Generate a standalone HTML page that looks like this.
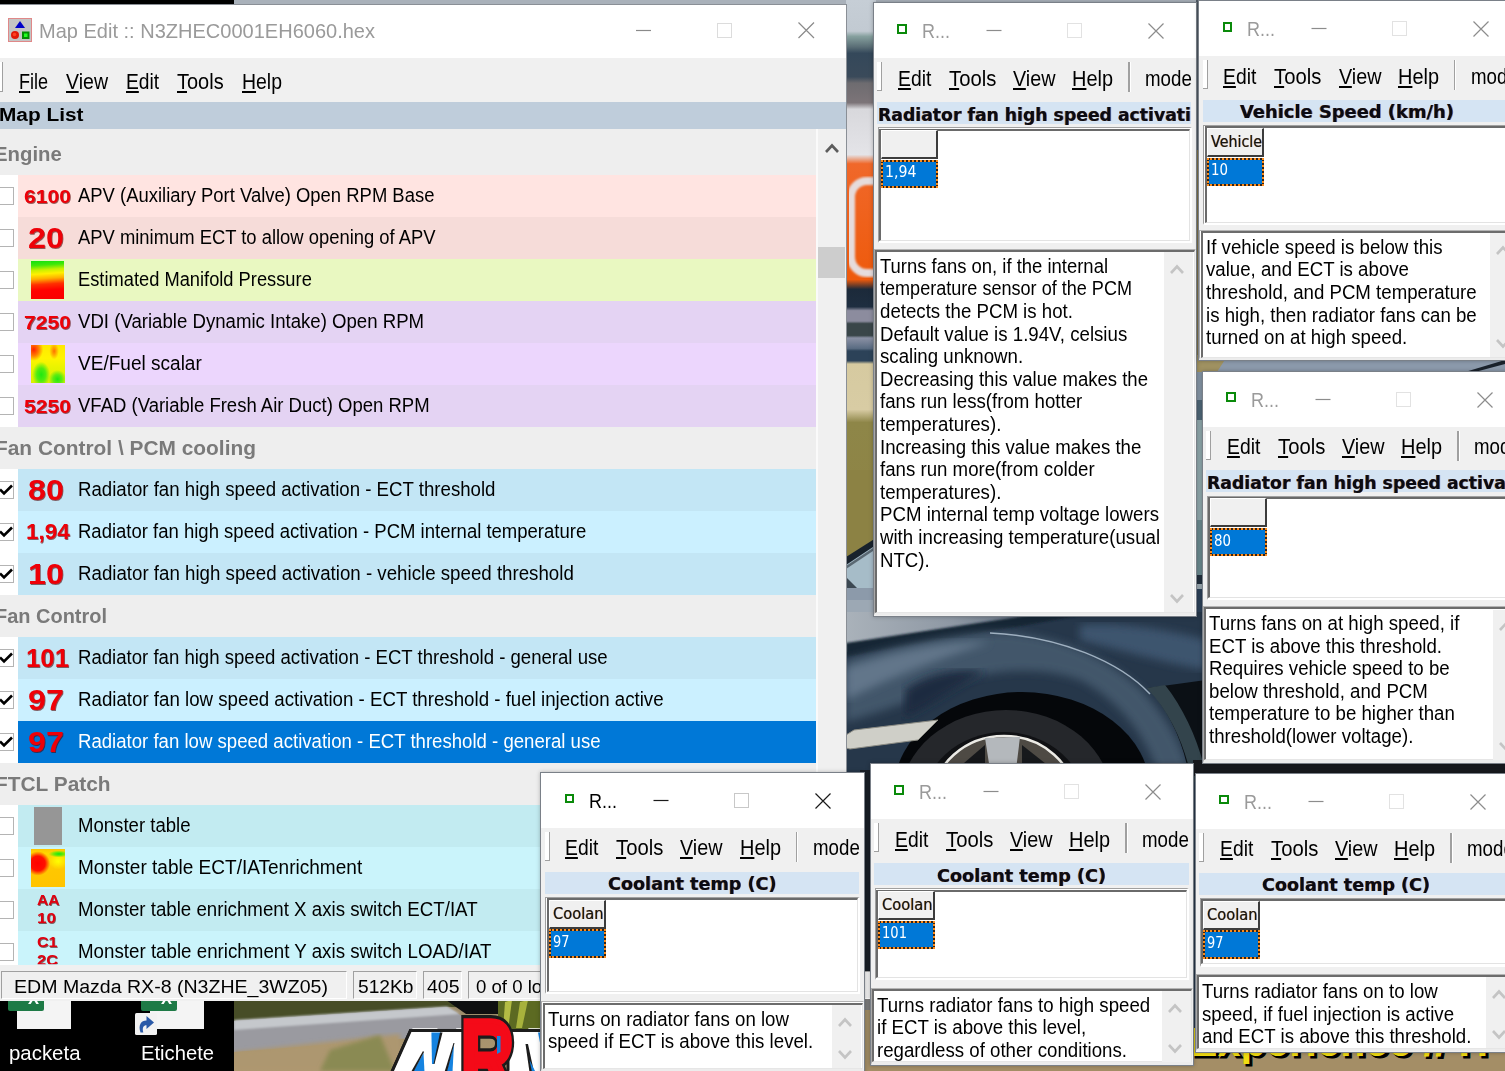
<!DOCTYPE html>
<html><head><meta charset="utf-8"><title>Map Edit</title><style>
html,body{margin:0;padding:0}
body{width:1505px;height:1071px;overflow:hidden;position:relative;background:#000;font-family:'Liberation Sans',sans-serif}
#r{position:absolute;left:0;top:0;width:1505px;height:1071px;overflow:hidden}
#r div,#r svg{position:absolute;box-sizing:border-box}
.t{position:absolute;white-space:pre;transform-origin:0 0;display:block}
.t u{text-decoration:underline;text-underline-offset:2px;text-decoration-thickness:1.5px}
</style></head><body><div id="r">
<svg style="left:0;top:0" width="1505" height="1071" viewBox="0 0 1505 1071">
<defs>
<filter id="b2" x="-5%" y="-5%" width="110%" height="110%"><feGaussianBlur stdDeviation="2"/></filter>
<filter id="b4" x="-5%" y="-5%" width="110%" height="110%"><feGaussianBlur stdDeviation="4"/></filter>
<filter id="b1" x="-5%" y="-5%" width="110%" height="110%"><feGaussianBlur stdDeviation="1"/></filter>
<linearGradient id="strip" x1="0" y1="0" x2="0" y2="1">
<stop offset="0" stop-color="#c6ced6"/><stop offset="0.048" stop-color="#c2cad2"/><stop offset="0.056" stop-color="#86a09e"/>
<stop offset="0.072" stop-color="#5a6e76"/><stop offset="0.082" stop-color="#34485a"/><stop offset="0.118" stop-color="#3a4a5a"/><stop offset="0.128" stop-color="#6e6c70"/>
<stop offset="0.158" stop-color="#7c7478"/><stop offset="0.168" stop-color="#d8d8dc"/><stop offset="0.238" stop-color="#e4e4e8"/>
<stop offset="0.252" stop-color="#f0682a"/><stop offset="0.430" stop-color="#ee5a0c"/><stop offset="0.445" stop-color="#1c2a3a"/>
<stop offset="0.472" stop-color="#1e2e40"/><stop offset="0.478" stop-color="#8c8c9e"/><stop offset="0.494" stop-color="#8c8c9e"/>
<stop offset="0.498" stop-color="#3a4649"/><stop offset="0.516" stop-color="#3a4649"/><stop offset="0.520" stop-color="#8a90a4"/>
<stop offset="0.536" stop-color="#5a6c82"/><stop offset="0.540" stop-color="#2c4258"/><stop offset="0.555" stop-color="#2c4258"/>
<stop offset="0.560" stop-color="#d6caa0"/><stop offset="0.630" stop-color="#d8cca4"/><stop offset="0.650" stop-color="#8e8648"/>
<stop offset="1" stop-color="#8c8040"/>
</linearGradient>
<linearGradient id="hood" x1="0" y1="0" x2="1" y2="0"><stop offset="0" stop-color="#aab2ba"/><stop offset="0.5" stop-color="#8e98a4"/><stop offset="1" stop-color="#566476"/></linearGradient>
<linearGradient id="sand" x1="0" y1="0" x2="0" y2="1"><stop offset="0" stop-color="#9a8a6a"/><stop offset="1" stop-color="#b09a70"/></linearGradient>
</defs>
<!-- base -->
<rect width="1505" height="1071" fill="#2a3b50"/>
<!-- top edge strip -->
<rect x="234" y="0" width="1271" height="5" fill="#a9b1ba"/>
<rect x="0" y="0" width="234" height="4" fill="#000"/>
<!-- vertical strip between main window and win1 (x 846..874), y 0..650 -->
<rect x="846" y="0" width="30" height="650" fill="url(#strip)"/>
<!-- white "0" ring on orange -->
<rect x="851" y="181" width="40" height="92" rx="16" fill="none" stroke="#e6dcdc" stroke-width="8" filter="url(#b1)"/>
<!-- lower strip: olive -> windshield -> car -->
<rect x="846" y="470" width="30" height="110" fill="#8c8244"/>
<polygon points="846,560 876,540 876,700 846,700" fill="#a6bcc8"/>
<polygon points="846,557 876,538 876,545 846,565" fill="#18222c"/>
<polygon points="846,566 876,546 876,549 846,569" fill="#5a6872"/>
<polygon points="846,577 857,588 846,590" fill="#3c4852"/>
<rect x="846" y="588" width="30" height="60" fill="#8c9aaa"/>
<rect x="846" y="600" width="30" height="14" fill="#9ca8b4"/>
<!-- gap between win1/win2 columns and right gaps -->
<rect x="1196" y="0" width="8" height="380" fill="#55606a"/>
<rect x="1196" y="150" width="8" height="215" fill="#8a7c50"/>
<rect x="1196" y="355" width="309" height="20" fill="#8c9aac"/>
<polygon points="1196,355 1228,355 1215,375 1196,375" fill="#a09262"/>
<polygon points="1465,372 1505,360 1505,364 1475,372" fill="#1a222c"/>
<rect x="1195" y="372" width="10" height="30" fill="#8494a4"/>
<rect x="1195" y="400" width="10" height="20" fill="#4e6676"/>
<rect x="1195" y="420" width="10" height="156" fill="#8ea6aa"/>
<rect x="1195" y="520" width="10" height="56" fill="#6a888e"/>
<rect x="1195" y="575" width="10" height="9" fill="#22303e"/>
<rect x="1195" y="584" width="10" height="5" fill="#9aa8b0"/>
<rect x="1195" y="589" width="10" height="33" fill="#2c4058"/>
<!-- fender region (x 846..1206, y 612..780) -->
<g>
<rect x="846" y="612" width="364" height="170" fill="#26374a"/>
<polygon points="846,612 1060,612 846,652" fill="url(#hood)"/>
<polygon points="846,643 1050,612 1100,612 846,657" fill="#172536" filter="url(#b1)"/>
<!-- fender highlight -->
<path d="M846 660 C 900 645, 960 632, 1000 632 C 1060 634, 1110 660, 1140 688 C 1170 720, 1185 750, 1192 782 L 1160 782 C 1150 740, 1120 700, 1080 680 C 1040 665, 980 668, 940 690 C 900 705, 870 715, 846 722 Z" fill="#43566b" filter="url(#b4)"/>
<path d="M846 668 C 900 650, 950 640, 990 642 C 960 652, 900 672, 846 700 Z" fill="#62768a" filter="url(#b4)"/>
<path d="M1080 625 C 1120 622, 1170 630, 1206 640 L 1206 670 C 1170 664, 1120 650, 1080 640 Z" fill="#3d546e" filter="url(#b4)"/>
<path d="M905 690 C 930 672, 960 668, 985 672 C 960 685, 930 705, 905 718 Z" fill="#1d2c3f" filter="url(#b4)"/>
<!-- arch ridge highlight -->
<path d="M990 633 C 1060 636, 1120 662, 1150 694" stroke="#9fb0c0" stroke-width="1.5" fill="none"/>
<!-- wheel arch -->
<ellipse cx="1022" cy="790" rx="128" ry="98" fill="#05070a"/>
<ellipse cx="1006" cy="800" rx="106" ry="90" fill="#25272b"/>
<ellipse cx="1004" cy="806" rx="82" ry="74" fill="#101114"/>
<ellipse cx="1004" cy="800" rx="71" ry="64" fill="#4e4a44" stroke="#ecebe6" stroke-width="2.5"/>
<polygon points="985,738 1020,737 1016,770 990,770" fill="#b4b8bc"/>
<polygon points="950,775 985,745 985,770 960,775" fill="#15171a"/>
<polygon points="1022,745 1060,775 1022,775" fill="#17191c"/>
<!-- side marker -->
<polygon points="846,735 854,730 938,720 918,740 850,749 846,748" fill="#cfcfc8" stroke="#8c8c84" stroke-width="1"/>
<!-- right vent -->
<path d="M1148 688 L 1206 680 L 1206 782 L 1190 782 C 1185 745, 1170 712, 1148 688 Z" fill="#0b1015"/>
<path d="M1147 688 L 1165 685 C 1185 710, 1200 745, 1206 775 L 1206 782 L 1192 782 C 1186 748, 1172 715, 1147 688 Z" fill="#33444c"/>
</g>
<!-- gap between win3 & win6, right of win5 -->
<rect x="1193" y="760" width="312" height="16" fill="#17191d"/>
<!-- gap between win4 and win5 (x 864..871) -->
<rect x="860" y="770" width="14" height="301" fill="#181e26"/>
<rect x="860" y="975" width="14" height="36" fill="#7c7c7c"/>
<rect x="860" y="1010" width="14" height="61" fill="#a08c64"/>
<!-- bottom sand under win5 / win6 -->
<rect x="863" y="1060" width="642" height="11" fill="#a48e66"/>
<rect x="1190" y="1046" width="315" height="25" fill="#a48e66"/>
<text x="1192.5" y="1058" font-family="'Liberation Sans',sans-serif" font-weight="700" font-size="41" fill="#000" stroke="#000" stroke-width="1.2" letter-spacing="0.3">Experience // H</text>
<text x="1190" y="1055.5" font-family="'Liberation Sans',sans-serif" font-weight="700" font-size="41" fill="#f2dc12" letter-spacing="0.3">Experience // H</text>
<!-- bottom-left photo (x 234..545, y 1000..1071) -->
<g>
<rect x="234" y="1000" width="312" height="71" fill="url(#sand)"/>
<polygon points="234,1000 546,1000 546,1008 447,1007 234,1021" fill="#474d27"/>
<polygon points="234,1021 447,1007 462,1016 462,1034 234,1052" fill="#9a9aa0"/>
<polygon points="234,1020 447,1006.5 460,1014 234,1030" fill="#c5c8cc" filter="url(#b1)"/>
<polygon points="234,1052 400,1034 400,1071 234,1071" fill="#ad9770" filter="url(#b2)"/>
<polygon points="330,1050 380,1035 395,1071 320,1071" fill="#8a8a52" filter="url(#b2)"/>
<polygon points="446,1000 500,1000 500,1014 466,1014" fill="#0e0f10"/>
<rect x="498" y="1000" width="48" height="36" fill="#5c6a22"/>
<polygon points="505,1002 512,1000 508,1030 503,1030" fill="#b4bc44"/>
<polygon points="520,1002 528,1000 522,1028 516,1028" fill="#a8b23c"/>
<!-- MRN logo -->
<g font-family="'Liberation Sans',sans-serif" font-weight="700" stroke-linejoin="miter">
<polygon points="410.5,1030.5 472,1030.5 472,1075 390.5,1075" fill="#ffffff" stroke="#1c1c1c" stroke-width="3"/>
<polygon points="508,1030.5 548,1030.5 548,1075 508,1075" fill="#ffffff" stroke="#1c1c1c" stroke-width="3"/>
<g transform="translate(392,1071) skewX(-24)">
<text x="1" y="20" font-size="84" fill="#ffffff" stroke="#ffffff" stroke-width="10">M</text>
<text x="117" y="20" font-size="84" fill="#ffffff" stroke="#ffffff" stroke-width="10">N</text>
</g>
<polyline points="390.5,1075 410.5,1030.5 472,1030.5" fill="none" stroke="#1c1c1c" stroke-width="3"/>
<polyline points="508,1030.5 548,1030.5" fill="none" stroke="#1c1c1c" stroke-width="3"/>
<polygon points="431.4,1032.5 441,1032.5 434,1064 432,1064" fill="#1583e0"/>
<polygon points="440,1032.5 442.5,1032.5 434.5,1064 433.5,1064" fill="#1c1c1c"/>
<polygon points="413,1072 424.5,1072 423.5,1053" fill="#1583e0"/>
<polygon points="411,1072 413.5,1072 424,1052 423,1051" fill="#1c1c1c"/>
<polygon points="446.5,1072 452.5,1072 454,1044" fill="#1583e0"/>
<polygon points="444.5,1072 447,1072 454.5,1043 453.5,1043" fill="#1c1c1c"/>
<polygon points="525.5,1044 528,1044 534,1072 529.5,1072" fill="#1c1c1c"/>
<polygon points="529.5,1060 532,1072 535.5,1072" fill="#1583e0"/>
<polygon points="538,1032.5 541.5,1032.5 541.5,1050" fill="#1583e0"/>
<g transform="translate(464,1094) scale(0.70,1)">
<text x="-5" y="0" font-size="106" fill="#1c1c1c" stroke="#1c1c1c" stroke-width="12">R</text>
<text x="-5" y="0" font-size="106" fill="#f40a18" stroke="#f40a18" stroke-width="5.5">R</text>
</g>
<polygon points="497,1036 500.5,1036 500.5,1052 497,1054" fill="#1583e0"/>
</g>
</g>
</g>
</svg>

<div style="left:-1px;top:3.5px;width:848px;height:997.5px;background:#ffffff;border:1px solid #8a8f96;"></div>
<svg style="left:8px;top:18px" width="24" height="24" viewBox="0 0 24 24">
<rect x="0.5" y="0.5" width="23" height="23" fill="#c4c4c4" stroke="#e08888"/>
<polygon points="12,3 17,10 7,10" fill="#0000c8"/>
<circle cx="7" cy="17" r="4" fill="#e01808"/><circle cx="6.5" cy="16.5" r="1.8" fill="#ff4020"/>
<rect x="14" y="13.5" width="7.5" height="7.5" fill="#008c00"/><rect x="16" y="15.5" width="3.5" height="3.5" fill="#20ff20"/>
</svg>
<span class="t" style="left:38.60px;top:21.74px;font:400 19.8px/1 'Liberation Sans', sans-serif;color:#9a9a9a;transform:scaleX(1.0119);">Map Edit :: N3ZHEC0001EH6060.hex</span>
<svg style="left:620px;top:4px" width="226" height="54" viewBox="0 0 226 54" fill="none">
<path d="M16 26.5H31" stroke="#8a8a8a" stroke-width="1.2"/>
<rect x="97.5" y="19.5" width="14" height="14" stroke="#dcdcdc" stroke-width="1"/>
<path d="M178.5 18.5L194 34M194 18.5L178.5 34" stroke="#8a8a8a" stroke-width="1.2"/>
</svg>
<div style="left:0px;top:58px;width:846px;height:44px;background:#f0f0f0;"></div>
<div style="left:0px;top:62px;width:3px;height:30px;background:#ffffff;border-right:1px solid #a0a0a0;border-bottom:1px solid #a0a0a0;"></div>
<span class="t" style="left:19.30px;top:71.88px;font:400 21.4px/1 'Liberation Sans', sans-serif;color:#000;transform:scaleX(0.8442);"><u>F</u>ile</span>
<span class="t" style="left:66.20px;top:71.88px;font:400 21.4px/1 'Liberation Sans', sans-serif;color:#000;transform:scaleX(0.9134);"><u>V</u>iew</span>
<span class="t" style="left:126.00px;top:71.88px;font:400 21.4px/1 'Liberation Sans', sans-serif;color:#000;transform:scaleX(0.8980);"><u>E</u>dit</span>
<span class="t" style="left:176.80px;top:71.88px;font:400 21.4px/1 'Liberation Sans', sans-serif;color:#000;transform:scaleX(0.9332);"><u>T</u>ools</span>
<span class="t" style="left:241.60px;top:71.88px;font:400 21.4px/1 'Liberation Sans', sans-serif;color:#000;transform:scaleX(0.9091);"><u>H</u>elp</span>
<div style="left:0px;top:102px;width:846px;height:27px;background:#bfcddb;"></div>
<span class="t" style="left:-1.00px;top:106.37px;font:700 18.7px/1 'Liberation Sans', sans-serif;color:#000;transform:scaleX(1.1148);">Map List</span>
<div style="left:0px;top:129px;width:846px;height:842px;background:#f0f0f0;"></div>
<div style="left:0px;top:129px;width:816px;height:836px;background:#eeeeee;"></div>
<div style="left:816px;top:129px;width:2px;height:836px;background:#fafafa;"></div>
<div style="left:818px;top:129px;width:28px;height:836px;background:#f0f0f0;"></div>
<div style="left:818px;top:247px;width:27px;height:31px;background:#cdcdcd;"></div>
<svg style="left:824px;top:142px" width="16" height="12" viewBox="0 0 16 12" fill="none"><path d="M2 10L8 3.5L14 10" stroke="#5c5c5c" stroke-width="2.6"/></svg>
<span class="t" style="left:-6.30px;top:143.59px;font:700 20.8px/1 'Liberation Sans', sans-serif;color:#7a7a7a;transform:scaleX(0.9780);">Engine</span>
<div style="left:0px;top:175px;width:18px;height:42px;background:#ffffff;"></div>
<div style="left:18px;top:175px;width:798px;height:42px;background:#ffe4e1;"></div>
<div style="left:-4px;top:187px;width:18px;height:18px;background:#ffffff;border:1px solid #b4b4b4;"></div>
<span class="t" style="left:24.35px;top:186.72px;font:700 19.0px/1 'Liberation Sans', sans-serif;color:#ee0008;transform:scaleX(1.1093);text-shadow:0.8px 0.8px 0.6px rgba(80,0,0,.6);">6100</span>
<span class="t" style="left:78.20px;top:185.27px;font:400 20px/1 'Liberation Sans', sans-serif;color:#000000;transform:scaleX(0.9223);">APV (Auxiliary Port Valve) Open RPM Base</span>
<div style="left:0px;top:217px;width:18px;height:42px;background:#ffffff;"></div>
<div style="left:18px;top:217px;width:798px;height:42px;background:#f6dcd9;"></div>
<div style="left:-4px;top:229px;width:18px;height:18px;background:#ffffff;border:1px solid #b4b4b4;"></div>
<span class="t" style="left:28.39px;top:223.34px;font:700 30.0px/1 'Liberation Sans', sans-serif;color:#ee0008;transform:scaleX(1.0795);text-shadow:0.8px 0.8px 0.6px rgba(80,0,0,.6);">20</span>
<span class="t" style="left:78.20px;top:227.27px;font:400 20px/1 'Liberation Sans', sans-serif;color:#000000;transform:scaleX(0.9200);">APV minimum ECT to allow opening of APV</span>
<div style="left:0px;top:259px;width:18px;height:42px;background:#ffffff;"></div>
<div style="left:18px;top:259px;width:798px;height:42px;background:#e9f8c1;"></div>
<div style="left:-4px;top:271px;width:18px;height:18px;background:#ffffff;border:1px solid #b4b4b4;"></div>
<div style="left:30.7px;top:260.7px;width:33.2px;height:38.3px;background:linear-gradient(176deg,#10e010 0%,#40e808 12%,#c8f000 24%,#fff000 34%,#ffb000 46%,#ff3000 60%,#ff0000 75%,#f80000 100%);"></div>
<span class="t" style="left:78.20px;top:269.27px;font:400 20px/1 'Liberation Sans', sans-serif;color:#000000;transform:scaleX(0.9145);">Estimated Manifold Pressure</span>
<div style="left:0px;top:301px;width:18px;height:42px;background:#ffffff;"></div>
<div style="left:18px;top:301px;width:798px;height:42px;background:#e4d3f3;"></div>
<div style="left:-4px;top:313px;width:18px;height:18px;background:#ffffff;border:1px solid #b4b4b4;"></div>
<span class="t" style="left:24.35px;top:312.72px;font:700 19.0px/1 'Liberation Sans', sans-serif;color:#ee0008;transform:scaleX(1.1093);text-shadow:0.8px 0.8px 0.6px rgba(80,0,0,.6);">7250</span>
<span class="t" style="left:78.20px;top:311.27px;font:400 20px/1 'Liberation Sans', sans-serif;color:#000000;transform:scaleX(0.9304);">VDI (Variable Dynamic Intake) Open RPM</span>
<div style="left:0px;top:343px;width:18px;height:42px;background:#ffffff;"></div>
<div style="left:18px;top:343px;width:798px;height:42px;background:#ecd6fd;"></div>
<div style="left:-4px;top:355px;width:18px;height:18px;background:#ffffff;border:1px solid #b4b4b4;"></div>
<div style="left:30.7px;top:344.8px;width:34.7px;height:38.6px;background:radial-gradient(ellipse 28% 30% at 8% 12%,#ff2000 0%,#ff8000 55%,rgba(255,200,0,0) 100%),radial-gradient(ellipse 14% 22% at 68% 16%,#ff7000 0%,rgba(255,220,0,0) 100%),radial-gradient(ellipse 26% 34% at 30% 78%,#20e810 0%,#50ec10 50%,rgba(160,240,0,0) 100%),radial-gradient(ellipse 26% 24% at 78% 90%,#20e810 0%,#60ec10 50%,rgba(200,240,0,0) 100%),linear-gradient(180deg,#ffe800 0%,#fff400 35%,#e8f400 60%,#d8f000 100%);"></div>
<span class="t" style="left:78.20px;top:353.27px;font:400 20px/1 'Liberation Sans', sans-serif;color:#000000;transform:scaleX(0.9519);">VE/Fuel scalar</span>
<div style="left:0px;top:385px;width:18px;height:42px;background:#ffffff;"></div>
<div style="left:18px;top:385px;width:798px;height:42px;background:#e4d3f3;"></div>
<div style="left:-4px;top:397px;width:18px;height:18px;background:#ffffff;border:1px solid #b4b4b4;"></div>
<span class="t" style="left:24.35px;top:396.72px;font:700 19.0px/1 'Liberation Sans', sans-serif;color:#ee0008;transform:scaleX(1.1093);text-shadow:0.8px 0.8px 0.6px rgba(80,0,0,.6);">5250</span>
<span class="t" style="left:78.20px;top:395.27px;font:400 20px/1 'Liberation Sans', sans-serif;color:#000000;transform:scaleX(0.9259);">VFAD (Variable Fresh Air Duct) Open RPM</span>
<span class="t" style="left:-5.00px;top:437.59px;font:700 20.8px/1 'Liberation Sans', sans-serif;color:#7a7a7a;transform:scaleX(1.0040);">Fan Control \ PCM cooling</span>
<div style="left:0px;top:469px;width:18px;height:42px;background:#ffffff;"></div>
<div style="left:18px;top:469px;width:798px;height:42px;background:#c3e6f5;"></div>
<div style="left:-4px;top:481px;width:18px;height:18px;background:#ffffff;border:1px solid #b4b4b4;"></div>
<svg style="left:0px;top:484px" width="13" height="13" viewBox="0 0 13 13" fill="none"><path d="M0 5.5L4 9.5L12 1.5" stroke="#000" stroke-width="2.6"/></svg>
<span class="t" style="left:28.39px;top:475.35px;font:700 30.0px/1 'Liberation Sans', sans-serif;color:#ee0008;transform:scaleX(1.0795);text-shadow:0.8px 0.8px 0.6px rgba(80,0,0,.6);">80</span>
<span class="t" style="left:78.20px;top:479.27px;font:400 20px/1 'Liberation Sans', sans-serif;color:#000000;transform:scaleX(0.9326);">Radiator fan high speed activation - ECT threshold</span>
<div style="left:0px;top:511px;width:18px;height:42px;background:#ffffff;"></div>
<div style="left:18px;top:511px;width:798px;height:42px;background:#cbf0ff;"></div>
<div style="left:-4px;top:523px;width:18px;height:18px;background:#ffffff;border:1px solid #b4b4b4;"></div>
<svg style="left:0px;top:526px" width="13" height="13" viewBox="0 0 13 13" fill="none"><path d="M0 5.5L4 9.5L12 1.5" stroke="#000" stroke-width="2.6"/></svg>
<span class="t" style="left:25.97px;top:521.25px;font:700 22.0px/1 'Liberation Sans', sans-serif;color:#ee0008;transform:scaleX(1.0196);text-shadow:0.8px 0.8px 0.6px rgba(80,0,0,.6);">1,94</span>
<span class="t" style="left:78.20px;top:521.27px;font:400 20px/1 'Liberation Sans', sans-serif;color:#000000;transform:scaleX(0.9254);">Radiator fan high speed activation - PCM internal temperature</span>
<div style="left:0px;top:553px;width:18px;height:42px;background:#ffffff;"></div>
<div style="left:18px;top:553px;width:798px;height:42px;background:#c3e6f5;"></div>
<div style="left:-4px;top:565px;width:18px;height:18px;background:#ffffff;border:1px solid #b4b4b4;"></div>
<svg style="left:0px;top:568px" width="13" height="13" viewBox="0 0 13 13" fill="none"><path d="M0 5.5L4 9.5L12 1.5" stroke="#000" stroke-width="2.6"/></svg>
<span class="t" style="left:28.39px;top:559.35px;font:700 30.0px/1 'Liberation Sans', sans-serif;color:#ee0008;transform:scaleX(1.0795);text-shadow:0.8px 0.8px 0.6px rgba(80,0,0,.6);">10</span>
<span class="t" style="left:78.20px;top:563.27px;font:400 20px/1 'Liberation Sans', sans-serif;color:#000000;transform:scaleX(0.9349);">Radiator fan high speed activation - vehicle speed threshold</span>
<span class="t" style="left:-5.00px;top:605.59px;font:700 20.8px/1 'Liberation Sans', sans-serif;color:#7a7a7a;transform:scaleX(0.9598);">Fan Control</span>
<div style="left:0px;top:637px;width:18px;height:42px;background:#ffffff;"></div>
<div style="left:18px;top:637px;width:798px;height:42px;background:#c3e6f5;"></div>
<div style="left:-4px;top:649px;width:18px;height:18px;background:#ffffff;border:1px solid #b4b4b4;"></div>
<svg style="left:0px;top:652px" width="13" height="13" viewBox="0 0 13 13" fill="none"><path d="M0 5.5L4 9.5L12 1.5" stroke="#000" stroke-width="2.6"/></svg>
<span class="t" style="left:26.32px;top:645.79px;font:700 25.0px/1 'Liberation Sans', sans-serif;color:#ee0008;transform:scaleX(1.0295);text-shadow:0.8px 0.8px 0.6px rgba(80,0,0,.6);">101</span>
<span class="t" style="left:78.20px;top:647.27px;font:400 20px/1 'Liberation Sans', sans-serif;color:#000000;transform:scaleX(0.9292);">Radiator fan high speed activation - ECT threshold - general use</span>
<div style="left:0px;top:679px;width:18px;height:42px;background:#ffffff;"></div>
<div style="left:18px;top:679px;width:798px;height:42px;background:#cbf0ff;"></div>
<div style="left:-4px;top:691px;width:18px;height:18px;background:#ffffff;border:1px solid #b4b4b4;"></div>
<svg style="left:0px;top:694px" width="13" height="13" viewBox="0 0 13 13" fill="none"><path d="M0 5.5L4 9.5L12 1.5" stroke="#000" stroke-width="2.6"/></svg>
<span class="t" style="left:28.39px;top:685.35px;font:700 30.0px/1 'Liberation Sans', sans-serif;color:#ee0008;transform:scaleX(1.0795);text-shadow:0.8px 0.8px 0.6px rgba(80,0,0,.6);">97</span>
<span class="t" style="left:78.20px;top:689.27px;font:400 20px/1 'Liberation Sans', sans-serif;color:#000000;transform:scaleX(0.9345);">Radiator fan low speed activation - ECT threshold - fuel injection active</span>
<div style="left:0px;top:721px;width:18px;height:42px;background:#ffffff;"></div>
<div style="left:18px;top:721px;width:798px;height:42px;background:#0078d7;"></div>
<div style="left:-4px;top:733px;width:18px;height:18px;background:#ffffff;border:1px solid #b4b4b4;"></div>
<svg style="left:0px;top:736px" width="13" height="13" viewBox="0 0 13 13" fill="none"><path d="M0 5.5L4 9.5L12 1.5" stroke="#000" stroke-width="2.6"/></svg>
<span class="t" style="left:28.39px;top:727.35px;font:700 30.0px/1 'Liberation Sans', sans-serif;color:#ee0008;transform:scaleX(1.0795);text-shadow:0.8px 0.8px 0.6px rgba(80,0,0,.6);">97</span>
<span class="t" style="left:78.20px;top:731.27px;font:400 20px/1 'Liberation Sans', sans-serif;color:#ffffff;transform:scaleX(0.9296);">Radiator fan low speed activation - ECT threshold - general use</span>
<span class="t" style="left:-5.00px;top:773.59px;font:700 20.8px/1 'Liberation Sans', sans-serif;color:#7a7a7a;transform:scaleX(1.0037);">FTCL Patch</span>
<div style="left:0px;top:805px;width:18px;height:42px;background:#ffffff;"></div>
<div style="left:18px;top:805px;width:798px;height:42px;background:#c2ebf1;"></div>
<div style="left:-4px;top:817px;width:18px;height:18px;background:#ffffff;border:1px solid #b4b4b4;"></div>
<div style="left:34.1px;top:806.9px;width:27.8px;height:37.9px;background:#969696;"></div>
<span class="t" style="left:78.20px;top:815.27px;font:400 20px/1 'Liberation Sans', sans-serif;color:#000000;transform:scaleX(0.9284);">Monster table</span>
<div style="left:0px;top:847px;width:18px;height:42px;background:#ffffff;"></div>
<div style="left:18px;top:847px;width:798px;height:42px;background:#caf4fb;"></div>
<div style="left:-4px;top:859px;width:18px;height:18px;background:#ffffff;border:1px solid #b4b4b4;"></div>
<div style="left:30.7px;top:848.9px;width:34.1px;height:38.1px;background:radial-gradient(ellipse 36% 32% at 20% 38%,#ff0000 0%,#ff1000 60%,rgba(255,120,0,0) 100%),radial-gradient(ellipse 30% 9% at 82% 13%,#10e810 0%,#70e808 50%,rgba(255,230,0,0) 100%),radial-gradient(ellipse 30% 22% at 80% 32%,#ffff00 0%,rgba(255,220,0,0) 100%),linear-gradient(180deg,#ffc400 0%,#ffd800 12%,#ffc800 45%,#ffc400 100%);"></div>
<span class="t" style="left:78.20px;top:857.27px;font:400 20px/1 'Liberation Sans', sans-serif;color:#000000;transform:scaleX(0.9516);">Monster table ECT/IATenrichment</span>
<div style="left:0px;top:889px;width:18px;height:42px;background:#ffffff;"></div>
<div style="left:18px;top:889px;width:798px;height:42px;background:#c2ebf1;"></div>
<div style="left:-4px;top:901px;width:18px;height:18px;background:#ffffff;border:1px solid #b4b4b4;"></div>
<span class="t" style="left:36.50px;top:893.10px;font:700 14.3px/1 'Liberation Sans', sans-serif;color:#e00010;transform:scaleX(1.0893);text-shadow:0.6px 0.6px 0.4px rgba(80,0,0,.6);">AA</span>
<span class="t" style="left:36.50px;top:910.90px;font:700 14.3px/1 'Liberation Sans', sans-serif;color:#e00010;transform:scaleX(1.1945);text-shadow:0.6px 0.6px 0.4px rgba(80,0,0,.6);clip-path:inset(0 0 0.0px 0);">10</span>
<span class="t" style="left:78.20px;top:899.27px;font:400 20px/1 'Liberation Sans', sans-serif;color:#000000;transform:scaleX(0.9346);">Monster table enrichment X axis switch ECT/IAT</span>
<div style="left:0px;top:931px;width:18px;height:34px;background:#ffffff;"></div>
<div style="left:18px;top:931px;width:798px;height:34px;background:#caf4fb;"></div>
<div style="left:-4px;top:943px;width:18px;height:18px;background:#ffffff;border:1px solid #b4b4b4;"></div>
<span class="t" style="left:36.50px;top:935.10px;font:700 14.3px/1 'Liberation Sans', sans-serif;color:#e00010;transform:scaleX(1.1214);text-shadow:0.6px 0.6px 0.4px rgba(80,0,0,.6);">C1</span>
<span class="t" style="left:36.50px;top:952.90px;font:700 14.3px/1 'Liberation Sans', sans-serif;color:#e00010;transform:scaleX(1.1487);text-shadow:0.6px 0.6px 0.4px rgba(80,0,0,.6);clip-path:inset(0 0 2.9px 0);">2C</span>
<span class="t" style="left:78.20px;top:941.27px;font:400 20px/1 'Liberation Sans', sans-serif;color:#000000;transform:scaleX(0.9370);">Monster table enrichment Y axis switch LOAD/IAT</span>
<div style="left:0px;top:965px;width:846px;height:7px;background:#f0f0f0;"></div>
<div style="left:0px;top:965px;width:846px;height:36px;background:#f0f0f0;"></div>
<div style="left:1px;top:971.4px;width:345.6px;height:27.8px;background:#f0f0f0;border-top:1.2px solid #a0a0a0;border-left:1.2px solid #a0a0a0;border-right:1.2px solid #ffffff;border-bottom:1.2px solid #ffffff;"></div>
<div style="left:352.7px;top:971.4px;width:64.69999999999999px;height:27.8px;background:#f0f0f0;border-top:1.2px solid #a0a0a0;border-left:1.2px solid #a0a0a0;border-right:1.2px solid #ffffff;border-bottom:1.2px solid #ffffff;"></div>
<div style="left:422.6px;top:971.4px;width:39.69999999999999px;height:27.8px;background:#f0f0f0;border-top:1.2px solid #a0a0a0;border-left:1.2px solid #a0a0a0;border-right:1.2px solid #ffffff;border-bottom:1.2px solid #ffffff;"></div>
<div style="left:468.4px;top:971.4px;width:431.6px;height:27.8px;background:#f0f0f0;border-top:1.2px solid #a0a0a0;border-left:1.2px solid #a0a0a0;border-right:1.2px solid #ffffff;border-bottom:1.2px solid #ffffff;"></div>
<span class="t" style="left:13.50px;top:976.75px;font:400 19.2px/1 'Liberation Sans', sans-serif;color:#000;transform:scaleX(1.0190);">EDM Mazda RX-8 (N3ZHE_3WZ05)</span>
<span class="t" style="left:357.70px;top:976.75px;font:400 19.2px/1 'Liberation Sans', sans-serif;color:#000;transform:scaleX(1.0003);">512Kb</span>
<span class="t" style="left:426.50px;top:976.75px;font:400 19.2px/1 'Liberation Sans', sans-serif;color:#000;transform:scaleX(1.0151);">405</span>
<span class="t" style="left:475.50px;top:976.75px;font:400 19.2px/1 'Liberation Sans', sans-serif;color:#000;transform:scaleX(0.9700);">0 of 0 lo</span>
<div style="left:0px;top:1001px;width:234px;height:70px;background:#000000;"></div>
<div style="left:17px;top:1001px;width:54px;height:28px;background:#f4f4f4;"></div>
<div style="left:8px;top:1001px;width:36px;height:10px;background:#1e7a46;border-radius:0 0 2px 2px;"></div>
<div style="left:150px;top:1001px;width:54px;height:28px;background:#f4f4f4;"></div>
<div style="left:141px;top:1001px;width:36px;height:10px;background:#1e7a46;border-radius:0 0 2px 2px;"></div>
<svg style="left:135px;top:1013px" width="22" height="22" viewBox="0 0 22 22"><rect width="22" height="22" rx="1.5" fill="#f2f2f2"/><path d="M5.5 19.5C3 12 6 7.5 11.5 7.5V3L19 9.5L11.5 16V12.2C8.5 12.2 7 14.5 8.3 19.5Z" fill="#2a5aa8"/></svg>
<span class="t" style="left:27.50px;top:990.76px;font:700 16px/1 'Liberation Sans', sans-serif;color:#ffffff;transform:scaleX(1.0307);clip-path:inset(9.5px 0 0 0);">X</span>
<span class="t" style="left:160.50px;top:990.76px;font:700 16px/1 'Liberation Sans', sans-serif;color:#ffffff;transform:scaleX(1.0307);clip-path:inset(9.5px 0 0 0);">X</span>
<span class="t" style="left:8.50px;top:1043.45px;font:400 20.5px/1 'Liberation Sans', sans-serif;color:#ffffff;transform:scaleX(0.9956);">packeta</span>
<span class="t" style="left:141.00px;top:1043.45px;font:400 20.5px/1 'Liberation Sans', sans-serif;color:#ffffff;transform:scaleX(0.9854);">Etichete</span>
<div style="left:872.8px;top:2.3px;width:324px;height:614.3px;background:#f0f0f0;border:1px solid #7a8088;box-shadow:0 0 4px rgba(0,0,0,.25);"></div>
<div style="left:873.8px;top:3.3px;width:322px;height:55px;background:#ffffff;"></div>
<div style="left:897.0999999999999px;top:24.1px;width:9.6px;height:9.6px;background:#ffffff;border:2px solid #0a8a0a;"></div>
<span class="t" style="left:921.80px;top:22.34px;font:400 19.8px/1 'Liberation Sans', sans-serif;color:#9a9a9a;transform:scaleX(0.9096);">R...</span>
<svg style="left:973.8px;top:3.3px" width="210" height="55" viewBox="0 0 210 55" fill="none">
<path d="M12.5 27.5H27.5" stroke="#8c8c8c" stroke-width="1.2"/>
<rect x="93.5" y="20.5" width="14" height="14" stroke="#e2e2e2" stroke-width="1"/>
<path d="M174.5 20.5L189.5 35.5M189.5 20.5L174.5 35.5" stroke="#8c8c8c" stroke-width="1.2"/>
</svg>
<div style="left:877.3px;top:62.3px;width:5px;height:29px;background:#ffffff;border-right:1.5px solid #a0a0a0;border-bottom:1.5px solid #a0a0a0;"></div>
<span class="t" style="left:897.60px;top:68.68px;font:400 21.4px/1 'Liberation Sans', sans-serif;color:#000;transform:scaleX(0.9034);"><u>E</u>dit</span>
<span class="t" style="left:948.60px;top:68.68px;font:400 21.4px/1 'Liberation Sans', sans-serif;color:#000;transform:scaleX(0.9472);"><u>T</u>ools</span>
<span class="t" style="left:1012.90px;top:68.68px;font:400 21.4px/1 'Liberation Sans', sans-serif;color:#000;transform:scaleX(0.9242);"><u>V</u>iew</span>
<span class="t" style="left:1072.40px;top:68.68px;font:400 21.4px/1 'Liberation Sans', sans-serif;color:#000;transform:scaleX(0.9318);"><u>H</u>elp</span>
<span class="t" style="left:1145.10px;top:68.68px;font:400 21.4px/1 'Liberation Sans', sans-serif;color:#000;transform:scaleX(0.8745);">mode</span>
<div style="left:1128.3px;top:62.3px;width:1.5px;height:30px;background:#a0a0a0;"></div>
<div style="left:1129.8px;top:62.3px;width:1px;height:30px;background:#ffffff;"></div>
<div style="left:877.3px;top:102.1px;width:314px;height:22.2px;background:#d5e4f3;"></div>
<span class="t" style="left:877.50px;top:105.56px;font:700 18px/1 'DejaVu Sans', sans-serif;color:#0a0a14;transform:scaleX(0.9579);text-shadow:-0.6px 0 0 rgba(200,110,0,.75),0.6px 0 0 rgba(0,40,160,.55);">Radiator fan high speed activati</span>
<div style="left:877.8px;top:127.3px;width:314px;height:115.7px;background:#ffffff;border:1.2px solid #a0a0a0;border-right:2px solid #ffffff;border-bottom:2px solid #ffffff;"></div>
<div style="left:879.0px;top:128.5px;width:310.8px;height:112.5px;background:#ffffff;border:2px solid #6a6a6a;border-right:1px solid #e3e3e3;border-bottom:1px solid #e3e3e3;"></div>
<div style="left:881.0999999999999px;top:129.9px;width:57px;height:29px;background:#f0f0f0;border-top:1px solid #ffffff;border-left:1px solid #ffffff;border-right:2px solid #3c3c3c;border-bottom:2px solid #3c3c3c;"></div>
<div style="left:881.0999999999999px;top:159.60000000000002px;width:57px;height:28.4px;background:#30241a;"></div>
<div style="left:881.0999999999999px;top:159.60000000000002px;width:57px;height:28.4px;background:#0078d7;border:2px dotted #ff8c1a;background-clip:padding-box;"></div>
<span class="t" style="left:885.30px;top:165.38px;font:400 15.5px/1 'DejaVu Sans', sans-serif;color:#ffffff;transform:scaleX(0.9126);">1,94</span>
<div style="left:873.8px;top:248.5px;width:322px;height:366.9px;background:#ffffff;border-top:1.5px solid #b4b4b4;border-left:1.2px solid #a8a8a8;border-right:1px solid #f4f4f4;border-bottom:3px solid #ececec;"></div>
<div style="left:875.0px;top:250.0px;width:319.8px;height:362.9px;background:#ffffff;border-top:2.2px solid #6c6c6c;border-left:2px solid #6c6c6c;border-right:1.5px solid #e6e6e6;border-bottom:0.5px solid #e6e6e6;"></div>
<div style="left:1164.3px;top:252.2px;width:29px;height:360.2px;background:#f0f0f0;"></div>
<svg style="left:1169.3px;top:262.7px" width="16" height="12" viewBox="0 0 16 12" fill="none"><path d="M2 10L8 3.5L14 10" stroke="#c4c4c4" stroke-width="2.6"/></svg>
<svg style="left:1169.3px;top:592.9px" width="16" height="12" viewBox="0 0 16 12" fill="none"><path d="M2 2L8 8.5L14 2" stroke="#c4c4c4" stroke-width="2.6"/></svg>
<span class="t" style="left:880.40px;top:255.77px;font:400 20px/1 'Liberation Sans', sans-serif;color:#000;transform:scaleX(0.9224);">Turns fans on, if the internal</span>
<span class="t" style="left:880.40px;top:278.37px;font:400 20px/1 'Liberation Sans', sans-serif;color:#000;transform:scaleX(0.9032);">temperature sensor of the PCM</span>
<span class="t" style="left:880.40px;top:300.97px;font:400 20px/1 'Liberation Sans', sans-serif;color:#000;transform:scaleX(0.9330);">detects the PCM is hot.</span>
<span class="t" style="left:880.40px;top:323.57px;font:400 20px/1 'Liberation Sans', sans-serif;color:#000;transform:scaleX(0.9330);">Default value is 1.94V, celsius</span>
<span class="t" style="left:880.40px;top:346.17px;font:400 20px/1 'Liberation Sans', sans-serif;color:#000;transform:scaleX(0.9330);">scaling unknown.</span>
<span class="t" style="left:880.40px;top:368.77px;font:400 20px/1 'Liberation Sans', sans-serif;color:#000;transform:scaleX(0.9272);">Decreasing this value makes the</span>
<span class="t" style="left:880.40px;top:391.37px;font:400 20px/1 'Liberation Sans', sans-serif;color:#000;transform:scaleX(0.9330);">fans run less(from hotter</span>
<span class="t" style="left:880.40px;top:413.97px;font:400 20px/1 'Liberation Sans', sans-serif;color:#000;transform:scaleX(0.9330);">temperatures).</span>
<span class="t" style="left:880.40px;top:436.57px;font:400 20px/1 'Liberation Sans', sans-serif;color:#000;transform:scaleX(0.9330);">Increasing this value makes the</span>
<span class="t" style="left:880.40px;top:459.17px;font:400 20px/1 'Liberation Sans', sans-serif;color:#000;transform:scaleX(0.9330);">fans run more(from colder</span>
<span class="t" style="left:880.40px;top:481.77px;font:400 20px/1 'Liberation Sans', sans-serif;color:#000;transform:scaleX(0.9330);">temperatures).</span>
<span class="t" style="left:880.40px;top:504.37px;font:400 20px/1 'Liberation Sans', sans-serif;color:#000;transform:scaleX(0.9330);">PCM internal temp voltage lowers</span>
<span class="t" style="left:880.40px;top:526.97px;font:400 20px/1 'Liberation Sans', sans-serif;color:#000;transform:scaleX(0.9330);">with increasing temperature(usual</span>
<span class="t" style="left:880.40px;top:549.57px;font:400 20px/1 'Liberation Sans', sans-serif;color:#000;transform:scaleX(0.9330);">NTC).</span>
<div style="left:1198.4px;top:0.19999999999999996px;width:324px;height:361.3px;background:#f0f0f0;border:1px solid #7a8088;box-shadow:0 0 4px rgba(0,0,0,.25);"></div>
<div style="left:1199.4px;top:1.2px;width:322px;height:55px;background:#ffffff;"></div>
<div style="left:1222.7px;top:22.0px;width:9.6px;height:9.6px;background:#ffffff;border:2px solid #0a8a0a;"></div>
<span class="t" style="left:1247.40px;top:20.24px;font:400 19.8px/1 'Liberation Sans', sans-serif;color:#9a9a9a;transform:scaleX(0.9096);">R...</span>
<svg style="left:1299.4px;top:1.2px" width="210" height="55" viewBox="0 0 210 55" fill="none">
<path d="M12.5 27.5H27.5" stroke="#8c8c8c" stroke-width="1.2"/>
<rect x="93.5" y="20.5" width="14" height="14" stroke="#e2e2e2" stroke-width="1"/>
<path d="M174.5 20.5L189.5 35.5M189.5 20.5L174.5 35.5" stroke="#8c8c8c" stroke-width="1.2"/>
</svg>
<div style="left:1202.9px;top:60.2px;width:5px;height:29px;background:#ffffff;border-right:1.5px solid #a0a0a0;border-bottom:1.5px solid #a0a0a0;"></div>
<span class="t" style="left:1223.20px;top:66.58px;font:400 21.4px/1 'Liberation Sans', sans-serif;color:#000;transform:scaleX(0.9034);"><u>E</u>dit</span>
<span class="t" style="left:1274.20px;top:66.58px;font:400 21.4px/1 'Liberation Sans', sans-serif;color:#000;transform:scaleX(0.9472);"><u>T</u>ools</span>
<span class="t" style="left:1338.50px;top:66.58px;font:400 21.4px/1 'Liberation Sans', sans-serif;color:#000;transform:scaleX(0.9242);"><u>V</u>iew</span>
<span class="t" style="left:1398.00px;top:66.58px;font:400 21.4px/1 'Liberation Sans', sans-serif;color:#000;transform:scaleX(0.9318);"><u>H</u>elp</span>
<span class="t" style="left:1470.70px;top:66.58px;font:400 21.4px/1 'Liberation Sans', sans-serif;color:#000;transform:scaleX(0.8745);">mode</span>
<div style="left:1453.9px;top:60.2px;width:1.5px;height:30px;background:#a0a0a0;"></div>
<div style="left:1455.4px;top:60.2px;width:1px;height:30px;background:#ffffff;"></div>
<div style="left:1202.9px;top:100.0px;width:314px;height:22.2px;background:#d5e4f3;"></div>
<span class="t" style="left:1239.50px;top:103.46px;font:700 18px/1 'DejaVu Sans', sans-serif;color:#0a0a14;transform:scaleX(0.9933);text-shadow:-0.6px 0 0 rgba(200,110,0,.75),0.6px 0 0 rgba(0,40,160,.55);">Vehicle Speed (km/h)</span>
<div style="left:1203.4px;top:125.2px;width:314px;height:99.8px;background:#ffffff;border:1.2px solid #a0a0a0;border-right:2px solid #ffffff;border-bottom:2px solid #ffffff;"></div>
<div style="left:1204.6000000000001px;top:126.4px;width:310.8px;height:96.6px;background:#ffffff;border:2px solid #6a6a6a;border-right:1px solid #e3e3e3;border-bottom:1px solid #e3e3e3;"></div>
<div style="left:1206.7px;top:127.8px;width:57px;height:29px;background:#f0f0f0;border-top:1px solid #ffffff;border-left:1px solid #ffffff;border-right:2px solid #3c3c3c;border-bottom:2px solid #3c3c3c;"></div>
<span class="t" style="left:1211.00px;top:133.96px;font:400 16px/1 'DejaVu Sans', sans-serif;color:#141414;transform:scaleX(0.8913);text-shadow:-0.6px 0 0 rgba(220,120,0,.7),0.6px 0 0 rgba(0,60,180,.45);">Vehicle</span>
<div style="left:1206.7px;top:157.5px;width:57px;height:28.4px;background:#30241a;"></div>
<div style="left:1206.7px;top:157.5px;width:57px;height:28.4px;background:#0078d7;border:2px dotted #ff8c1a;background-clip:padding-box;"></div>
<span class="t" style="left:1210.90px;top:163.28px;font:400 15.5px/1 'DejaVu Sans', sans-serif;color:#ffffff;transform:scaleX(0.8614);">10</span>
<div style="left:1199.4px;top:229.5px;width:322px;height:130.7px;background:#ffffff;border-top:1.5px solid #b4b4b4;border-left:1.2px solid #a8a8a8;border-right:1px solid #f4f4f4;border-bottom:3px solid #ececec;"></div>
<div style="left:1200.6000000000001px;top:231.0px;width:319.8px;height:126.7px;background:#ffffff;border-top:2.2px solid #6c6c6c;border-left:2px solid #6c6c6c;border-right:1.5px solid #e6e6e6;border-bottom:0.5px solid #e6e6e6;"></div>
<div style="left:1489.9px;top:233.2px;width:29px;height:124.0px;background:#f0f0f0;"></div>
<svg style="left:1494.9px;top:243.7px" width="16" height="12" viewBox="0 0 16 12" fill="none"><path d="M2 10L8 3.5L14 10" stroke="#c4c4c4" stroke-width="2.6"/></svg>
<svg style="left:1494.9px;top:337.7px" width="16" height="12" viewBox="0 0 16 12" fill="none"><path d="M2 2L8 8.5L14 2" stroke="#c4c4c4" stroke-width="2.6"/></svg>
<span class="t" style="left:1206.00px;top:236.77px;font:400 20px/1 'Liberation Sans', sans-serif;color:#000;transform:scaleX(0.9330);">If vehicle speed is below this</span>
<span class="t" style="left:1206.00px;top:259.37px;font:400 20px/1 'Liberation Sans', sans-serif;color:#000;transform:scaleX(0.9330);">value, and ECT is above</span>
<span class="t" style="left:1206.00px;top:281.97px;font:400 20px/1 'Liberation Sans', sans-serif;color:#000;transform:scaleX(0.9330);">threshold, and PCM temperature</span>
<span class="t" style="left:1206.00px;top:304.57px;font:400 20px/1 'Liberation Sans', sans-serif;color:#000;transform:scaleX(0.9330);">is high, then radiator fans can be</span>
<span class="t" style="left:1206.00px;top:327.17px;font:400 20px/1 'Liberation Sans', sans-serif;color:#000;transform:scaleX(0.9330);">turned on at high speed.</span>
<div style="left:1201.7px;top:370.5px;width:324px;height:393.5px;background:#f0f0f0;border:1px solid #7a8088;box-shadow:0 0 4px rgba(0,0,0,.25);"></div>
<div style="left:1202.7px;top:371.5px;width:322px;height:55px;background:#ffffff;"></div>
<div style="left:1226.0px;top:392.3px;width:9.6px;height:9.6px;background:#ffffff;border:2px solid #0a8a0a;"></div>
<span class="t" style="left:1250.70px;top:390.54px;font:400 19.8px/1 'Liberation Sans', sans-serif;color:#9a9a9a;transform:scaleX(0.9096);">R...</span>
<svg style="left:1302.7px;top:371.5px" width="210" height="55" viewBox="0 0 210 55" fill="none">
<path d="M12.5 27.5H27.5" stroke="#8c8c8c" stroke-width="1.2"/>
<rect x="93.5" y="20.5" width="14" height="14" stroke="#e2e2e2" stroke-width="1"/>
<path d="M174.5 20.5L189.5 35.5M189.5 20.5L174.5 35.5" stroke="#8c8c8c" stroke-width="1.2"/>
</svg>
<div style="left:1206.2px;top:430.5px;width:5px;height:29px;background:#ffffff;border-right:1.5px solid #a0a0a0;border-bottom:1.5px solid #a0a0a0;"></div>
<span class="t" style="left:1226.50px;top:436.88px;font:400 21.4px/1 'Liberation Sans', sans-serif;color:#000;transform:scaleX(0.9034);"><u>E</u>dit</span>
<span class="t" style="left:1277.50px;top:436.88px;font:400 21.4px/1 'Liberation Sans', sans-serif;color:#000;transform:scaleX(0.9472);"><u>T</u>ools</span>
<span class="t" style="left:1341.80px;top:436.88px;font:400 21.4px/1 'Liberation Sans', sans-serif;color:#000;transform:scaleX(0.9242);"><u>V</u>iew</span>
<span class="t" style="left:1401.30px;top:436.88px;font:400 21.4px/1 'Liberation Sans', sans-serif;color:#000;transform:scaleX(0.9318);"><u>H</u>elp</span>
<span class="t" style="left:1474.00px;top:436.88px;font:400 21.4px/1 'Liberation Sans', sans-serif;color:#000;transform:scaleX(0.8745);">mode</span>
<div style="left:1457.2px;top:430.5px;width:1.5px;height:30px;background:#a0a0a0;"></div>
<div style="left:1458.7px;top:430.5px;width:1px;height:30px;background:#ffffff;"></div>
<div style="left:1206.2px;top:470.3px;width:314px;height:22.2px;background:#d5e4f3;"></div>
<span class="t" style="left:1207.30px;top:473.76px;font:700 18px/1 'DejaVu Sans', sans-serif;color:#0a0a14;transform:scaleX(0.9579);text-shadow:-0.6px 0 0 rgba(200,110,0,.75),0.6px 0 0 rgba(0,40,160,.55);">Radiator fan high speed activati</span>
<div style="left:1206.7px;top:495.5px;width:314px;height:104.5px;background:#ffffff;border:1.2px solid #a0a0a0;border-right:2px solid #ffffff;border-bottom:2px solid #ffffff;"></div>
<div style="left:1207.9px;top:496.7px;width:310.8px;height:101.3px;background:#ffffff;border:2px solid #6a6a6a;border-right:1px solid #e3e3e3;border-bottom:1px solid #e3e3e3;"></div>
<div style="left:1210.0px;top:498.1px;width:57px;height:29px;background:#f0f0f0;border-top:1px solid #ffffff;border-left:1px solid #ffffff;border-right:2px solid #3c3c3c;border-bottom:2px solid #3c3c3c;"></div>
<div style="left:1210.0px;top:527.8px;width:57px;height:28.4px;background:#30241a;"></div>
<div style="left:1210.0px;top:527.8px;width:57px;height:28.4px;background:#0078d7;border:2px dotted #ff8c1a;background-clip:padding-box;"></div>
<span class="t" style="left:1214.20px;top:533.58px;font:400 15.5px/1 'DejaVu Sans', sans-serif;color:#ffffff;transform:scaleX(0.8614);">80</span>
<div style="left:1202.7px;top:605.8px;width:322px;height:157.2px;background:#ffffff;border-top:1.5px solid #b4b4b4;border-left:1.2px solid #a8a8a8;border-right:1px solid #f4f4f4;border-bottom:3px solid #ececec;"></div>
<div style="left:1203.9px;top:607.3px;width:319.8px;height:153.2px;background:#ffffff;border-top:2.2px solid #6c6c6c;border-left:2px solid #6c6c6c;border-right:1.5px solid #e6e6e6;border-bottom:0.5px solid #e6e6e6;"></div>
<div style="left:1493.2px;top:609.5px;width:29px;height:150.5px;background:#f0f0f0;"></div>
<svg style="left:1498.2px;top:620.0px" width="16" height="12" viewBox="0 0 16 12" fill="none"><path d="M2 10L8 3.5L14 10" stroke="#c4c4c4" stroke-width="2.6"/></svg>
<svg style="left:1498.2px;top:740.5px" width="16" height="12" viewBox="0 0 16 12" fill="none"><path d="M2 2L8 8.5L14 2" stroke="#c4c4c4" stroke-width="2.6"/></svg>
<span class="t" style="left:1209.30px;top:613.07px;font:400 20px/1 'Liberation Sans', sans-serif;color:#000;transform:scaleX(0.9330);">Turns fans on at high speed, if</span>
<span class="t" style="left:1209.30px;top:635.67px;font:400 20px/1 'Liberation Sans', sans-serif;color:#000;transform:scaleX(0.9330);">ECT is above this threshold.</span>
<span class="t" style="left:1209.30px;top:658.27px;font:400 20px/1 'Liberation Sans', sans-serif;color:#000;transform:scaleX(0.9330);">Requires vehicle speed to be</span>
<span class="t" style="left:1209.30px;top:680.87px;font:400 20px/1 'Liberation Sans', sans-serif;color:#000;transform:scaleX(0.9330);">below threshold, and PCM</span>
<span class="t" style="left:1209.30px;top:703.47px;font:400 20px/1 'Liberation Sans', sans-serif;color:#000;transform:scaleX(0.9330);">temperature to be higher than</span>
<span class="t" style="left:1209.30px;top:726.07px;font:400 20px/1 'Liberation Sans', sans-serif;color:#000;transform:scaleX(0.9330);">threshold(lower voltage).</span>
<div style="left:869.8px;top:763.4px;width:324.6px;height:302.8px;background:#f0f0f0;border:1px solid #7a8088;box-shadow:0 0 4px rgba(0,0,0,.25);"></div>
<div style="left:870.8px;top:764.4px;width:322.6px;height:55px;background:#ffffff;"></div>
<div style="left:894.0999999999999px;top:785.1999999999999px;width:9.6px;height:9.6px;background:#ffffff;border:2px solid #0a8a0a;"></div>
<span class="t" style="left:918.80px;top:783.44px;font:400 19.8px/1 'Liberation Sans', sans-serif;color:#9a9a9a;transform:scaleX(0.9096);">R...</span>
<svg style="left:970.8px;top:764.4px" width="210" height="55" viewBox="0 0 210 55" fill="none">
<path d="M12.5 27.5H27.5" stroke="#8c8c8c" stroke-width="1.2"/>
<rect x="93.5" y="20.5" width="14" height="14" stroke="#e2e2e2" stroke-width="1"/>
<path d="M174.5 20.5L189.5 35.5M189.5 20.5L174.5 35.5" stroke="#8c8c8c" stroke-width="1.2"/>
</svg>
<div style="left:874.3px;top:823.4px;width:5px;height:29px;background:#ffffff;border-right:1.5px solid #a0a0a0;border-bottom:1.5px solid #a0a0a0;"></div>
<span class="t" style="left:894.60px;top:829.78px;font:400 21.4px/1 'Liberation Sans', sans-serif;color:#000;transform:scaleX(0.9034);"><u>E</u>dit</span>
<span class="t" style="left:945.60px;top:829.78px;font:400 21.4px/1 'Liberation Sans', sans-serif;color:#000;transform:scaleX(0.9472);"><u>T</u>ools</span>
<span class="t" style="left:1009.90px;top:829.78px;font:400 21.4px/1 'Liberation Sans', sans-serif;color:#000;transform:scaleX(0.9242);"><u>V</u>iew</span>
<span class="t" style="left:1069.40px;top:829.78px;font:400 21.4px/1 'Liberation Sans', sans-serif;color:#000;transform:scaleX(0.9318);"><u>H</u>elp</span>
<span class="t" style="left:1142.10px;top:829.78px;font:400 21.4px/1 'Liberation Sans', sans-serif;color:#000;transform:scaleX(0.8745);">mode</span>
<div style="left:1125.3px;top:823.4px;width:1.5px;height:30px;background:#a0a0a0;"></div>
<div style="left:1126.8px;top:823.4px;width:1px;height:30px;background:#ffffff;"></div>
<div style="left:874.3px;top:863.1999999999999px;width:314.6px;height:22.2px;background:#d5e4f3;"></div>
<span class="t" style="left:936.50px;top:866.66px;font:700 18px/1 'DejaVu Sans', sans-serif;color:#0a0a14;transform:scaleX(0.9807);text-shadow:-0.6px 0 0 rgba(200,110,0,.75),0.6px 0 0 rgba(0,40,160,.55);">Coolant temp (C)</span>
<div style="left:874.8px;top:888.4px;width:314.6px;height:91.20000000000005px;background:#ffffff;border:1.2px solid #a0a0a0;border-right:2px solid #ffffff;border-bottom:2px solid #ffffff;"></div>
<div style="left:876.0px;top:889.6px;width:311.40000000000003px;height:88.00000000000004px;background:#ffffff;border:2px solid #6a6a6a;border-right:1px solid #e3e3e3;border-bottom:1px solid #e3e3e3;"></div>
<div style="left:878.0999999999999px;top:891.0px;width:57px;height:29px;background:#f0f0f0;border-top:1px solid #ffffff;border-left:1px solid #ffffff;border-right:2px solid #3c3c3c;border-bottom:2px solid #3c3c3c;"></div>
<span class="t" style="left:882.40px;top:897.16px;font:400 16px/1 'DejaVu Sans', sans-serif;color:#141414;transform:scaleX(0.9158);text-shadow:-0.6px 0 0 rgba(220,120,0,.7),0.6px 0 0 rgba(0,60,180,.45);">Coolan</span>
<div style="left:878.0999999999999px;top:920.7px;width:57px;height:28.4px;background:#30241a;"></div>
<div style="left:878.0999999999999px;top:920.7px;width:57px;height:28.4px;background:#0078d7;border:2px dotted #ff8c1a;background-clip:padding-box;"></div>
<span class="t" style="left:882.30px;top:926.48px;font:400 15.5px/1 'DejaVu Sans', sans-serif;color:#ffffff;transform:scaleX(0.8448);">101</span>
<div style="left:870.8px;top:987.5999999999999px;width:322.6px;height:77.40000000000005px;background:#ffffff;border-top:1.5px solid #b4b4b4;border-left:1.2px solid #a8a8a8;border-right:1px solid #f4f4f4;border-bottom:3px solid #ececec;"></div>
<div style="left:872.0px;top:989.0999999999999px;width:320.40000000000003px;height:73.40000000000005px;background:#ffffff;border-top:2.2px solid #6c6c6c;border-left:2px solid #6c6c6c;border-right:1.5px solid #e6e6e6;border-bottom:0.5px solid #e6e6e6;"></div>
<div style="left:1161.9px;top:991.3px;width:29px;height:70.70000000000005px;background:#f0f0f0;"></div>
<svg style="left:1166.9px;top:1001.8px" width="16" height="12" viewBox="0 0 16 12" fill="none"><path d="M2 10L8 3.5L14 10" stroke="#c4c4c4" stroke-width="2.6"/></svg>
<svg style="left:1166.9px;top:1042.5px" width="16" height="12" viewBox="0 0 16 12" fill="none"><path d="M2 2L8 8.5L14 2" stroke="#c4c4c4" stroke-width="2.6"/></svg>
<span class="t" style="left:877.40px;top:994.87px;font:400 20px/1 'Liberation Sans', sans-serif;color:#000;transform:scaleX(0.9330);">Turns radiator fans to high speed</span>
<span class="t" style="left:877.40px;top:1017.47px;font:400 20px/1 'Liberation Sans', sans-serif;color:#000;transform:scaleX(0.9330);">if ECT is above this level,</span>
<span class="t" style="left:877.40px;top:1040.07px;font:400 20px/1 'Liberation Sans', sans-serif;color:#000;transform:scaleX(0.9330);">regardless of other conditions.</span>
<div style="left:1194.8px;top:773px;width:324px;height:279.5px;background:#f0f0f0;border:1px solid #7a8088;box-shadow:0 0 4px rgba(0,0,0,.25);"></div>
<div style="left:1195.8px;top:774px;width:322px;height:55px;background:#ffffff;"></div>
<div style="left:1219.1px;top:794.8px;width:9.6px;height:9.6px;background:#ffffff;border:2px solid #0a8a0a;"></div>
<span class="t" style="left:1243.80px;top:793.04px;font:400 19.8px/1 'Liberation Sans', sans-serif;color:#9a9a9a;transform:scaleX(0.9096);">R...</span>
<svg style="left:1295.8px;top:774px" width="210" height="55" viewBox="0 0 210 55" fill="none">
<path d="M12.5 27.5H27.5" stroke="#8c8c8c" stroke-width="1.2"/>
<rect x="93.5" y="20.5" width="14" height="14" stroke="#e2e2e2" stroke-width="1"/>
<path d="M174.5 20.5L189.5 35.5M189.5 20.5L174.5 35.5" stroke="#8c8c8c" stroke-width="1.2"/>
</svg>
<div style="left:1199.3px;top:833px;width:5px;height:29px;background:#ffffff;border-right:1.5px solid #a0a0a0;border-bottom:1.5px solid #a0a0a0;"></div>
<span class="t" style="left:1219.60px;top:839.38px;font:400 21.4px/1 'Liberation Sans', sans-serif;color:#000;transform:scaleX(0.9034);"><u>E</u>dit</span>
<span class="t" style="left:1270.60px;top:839.38px;font:400 21.4px/1 'Liberation Sans', sans-serif;color:#000;transform:scaleX(0.9472);"><u>T</u>ools</span>
<span class="t" style="left:1334.90px;top:839.38px;font:400 21.4px/1 'Liberation Sans', sans-serif;color:#000;transform:scaleX(0.9242);"><u>V</u>iew</span>
<span class="t" style="left:1394.40px;top:839.38px;font:400 21.4px/1 'Liberation Sans', sans-serif;color:#000;transform:scaleX(0.9318);"><u>H</u>elp</span>
<span class="t" style="left:1467.10px;top:839.38px;font:400 21.4px/1 'Liberation Sans', sans-serif;color:#000;transform:scaleX(0.8745);">mode</span>
<div style="left:1450.3px;top:833px;width:1.5px;height:30px;background:#a0a0a0;"></div>
<div style="left:1451.8px;top:833px;width:1px;height:30px;background:#ffffff;"></div>
<div style="left:1199.3px;top:872.8px;width:314px;height:22.2px;background:#d5e4f3;"></div>
<span class="t" style="left:1262.30px;top:876.26px;font:700 18px/1 'DejaVu Sans', sans-serif;color:#0a0a14;transform:scaleX(0.9749);text-shadow:-0.6px 0 0 rgba(200,110,0,.75),0.6px 0 0 rgba(0,40,160,.55);">Coolant temp (C)</span>
<div style="left:1199.8px;top:898.0px;width:314px;height:68.5px;background:#ffffff;border:1.2px solid #a0a0a0;border-right:2px solid #ffffff;border-bottom:2px solid #ffffff;"></div>
<div style="left:1201.0px;top:899.2px;width:310.8px;height:65.3px;background:#ffffff;border:2px solid #6a6a6a;border-right:1px solid #e3e3e3;border-bottom:1px solid #e3e3e3;"></div>
<div style="left:1203.1px;top:900.6px;width:57px;height:29px;background:#f0f0f0;border-top:1px solid #ffffff;border-left:1px solid #ffffff;border-right:2px solid #3c3c3c;border-bottom:2px solid #3c3c3c;"></div>
<span class="t" style="left:1207.40px;top:906.76px;font:400 16px/1 'DejaVu Sans', sans-serif;color:#141414;transform:scaleX(0.9158);text-shadow:-0.6px 0 0 rgba(220,120,0,.7),0.6px 0 0 rgba(0,60,180,.45);">Coolan</span>
<div style="left:1203.1px;top:930.3px;width:57px;height:28.4px;background:#30241a;"></div>
<div style="left:1203.1px;top:930.3px;width:57px;height:28.4px;background:#0078d7;border:2px dotted #ff8c1a;background-clip:padding-box;"></div>
<span class="t" style="left:1207.30px;top:936.08px;font:400 15.5px/1 'DejaVu Sans', sans-serif;color:#ffffff;transform:scaleX(0.8361);">97</span>
<div style="left:1195.8px;top:973.6999999999999px;width:322px;height:77.59999999999998px;background:#ffffff;border-top:1.5px solid #b4b4b4;border-left:1.2px solid #a8a8a8;border-right:1px solid #f4f4f4;border-bottom:3px solid #ececec;"></div>
<div style="left:1197.0px;top:975.1999999999999px;width:319.8px;height:73.59999999999998px;background:#ffffff;border-top:2.2px solid #6c6c6c;border-left:2px solid #6c6c6c;border-right:1.5px solid #e6e6e6;border-bottom:0.5px solid #e6e6e6;"></div>
<div style="left:1486.3px;top:977.4px;width:29px;height:70.89999999999998px;background:#f0f0f0;"></div>
<svg style="left:1491.3px;top:987.9px" width="16" height="12" viewBox="0 0 16 12" fill="none"><path d="M2 10L8 3.5L14 10" stroke="#c4c4c4" stroke-width="2.6"/></svg>
<svg style="left:1491.3px;top:1028.8px" width="16" height="12" viewBox="0 0 16 12" fill="none"><path d="M2 2L8 8.5L14 2" stroke="#c4c4c4" stroke-width="2.6"/></svg>
<span class="t" style="left:1202.40px;top:980.97px;font:400 20px/1 'Liberation Sans', sans-serif;color:#000;transform:scaleX(0.9330);">Turns radiator fans on to low</span>
<span class="t" style="left:1202.40px;top:1003.57px;font:400 20px/1 'Liberation Sans', sans-serif;color:#000;transform:scaleX(0.9330);">speed, if fuel injection is active</span>
<span class="t" style="left:1202.40px;top:1026.17px;font:400 20px/1 'Liberation Sans', sans-serif;color:#000;transform:scaleX(0.9330);">and ECT is above this threshold.</span>
<div style="left:540.3px;top:772px;width:324.4px;height:322px;background:#f0f0f0;border:1px solid #7a8088;box-shadow:0 0 4px rgba(0,0,0,.25);"></div>
<div style="left:541.3px;top:773px;width:322.4px;height:55px;background:#ffffff;"></div>
<div style="left:564.5999999999999px;top:793.8px;width:9.6px;height:9.6px;background:#ffffff;border:2px solid #0a8a0a;"></div>
<span class="t" style="left:589.30px;top:792.04px;font:400 19.8px/1 'Liberation Sans', sans-serif;color:#000000;transform:scaleX(0.9096);">R...</span>
<svg style="left:641.3px;top:773px" width="210" height="55" viewBox="0 0 210 55" fill="none">
<path d="M12.5 27.5H27.5" stroke="#1a1a1a" stroke-width="1.2"/>
<rect x="93.5" y="20.5" width="14" height="14" stroke="#c8c8c8" stroke-width="1"/>
<path d="M174.5 20.5L189.5 35.5M189.5 20.5L174.5 35.5" stroke="#1a1a1a" stroke-width="1.2"/>
</svg>
<div style="left:544.8px;top:832px;width:5px;height:29px;background:#ffffff;border-right:1.5px solid #a0a0a0;border-bottom:1.5px solid #a0a0a0;"></div>
<span class="t" style="left:565.10px;top:838.38px;font:400 21.4px/1 'Liberation Sans', sans-serif;color:#000;transform:scaleX(0.9034);"><u>E</u>dit</span>
<span class="t" style="left:616.10px;top:838.38px;font:400 21.4px/1 'Liberation Sans', sans-serif;color:#000;transform:scaleX(0.9472);"><u>T</u>ools</span>
<span class="t" style="left:680.40px;top:838.38px;font:400 21.4px/1 'Liberation Sans', sans-serif;color:#000;transform:scaleX(0.9242);"><u>V</u>iew</span>
<span class="t" style="left:739.90px;top:838.38px;font:400 21.4px/1 'Liberation Sans', sans-serif;color:#000;transform:scaleX(0.9318);"><u>H</u>elp</span>
<span class="t" style="left:812.60px;top:838.38px;font:400 21.4px/1 'Liberation Sans', sans-serif;color:#000;transform:scaleX(0.8745);">mode</span>
<div style="left:795.8px;top:832px;width:1.5px;height:30px;background:#a0a0a0;"></div>
<div style="left:797.3px;top:832px;width:1px;height:30px;background:#ffffff;"></div>
<div style="left:544.8px;top:871.8px;width:314.4px;height:22.2px;background:#d5e4f3;"></div>
<span class="t" style="left:608.00px;top:875.26px;font:700 18px/1 'DejaVu Sans', sans-serif;color:#0a0a14;transform:scaleX(0.9778);text-shadow:-0.6px 0 0 rgba(200,110,0,.75),0.6px 0 0 rgba(0,40,160,.55);">Coolant temp (C)</span>
<div style="left:545.3px;top:897.0px;width:314.4px;height:96.79999999999995px;background:#ffffff;border:1.2px solid #a0a0a0;border-right:2px solid #ffffff;border-bottom:2px solid #ffffff;"></div>
<div style="left:546.5px;top:898.2px;width:311.2px;height:93.59999999999995px;background:#ffffff;border:2px solid #6a6a6a;border-right:1px solid #e3e3e3;border-bottom:1px solid #e3e3e3;"></div>
<div style="left:548.5999999999999px;top:899.6px;width:57px;height:29px;background:#f0f0f0;border-top:1px solid #ffffff;border-left:1px solid #ffffff;border-right:2px solid #3c3c3c;border-bottom:2px solid #3c3c3c;"></div>
<span class="t" style="left:552.90px;top:905.76px;font:400 16px/1 'DejaVu Sans', sans-serif;color:#141414;transform:scaleX(0.9158);text-shadow:-0.6px 0 0 rgba(220,120,0,.7),0.6px 0 0 rgba(0,60,180,.45);">Coolan</span>
<div style="left:548.5999999999999px;top:929.3px;width:57px;height:28.4px;background:#30241a;"></div>
<div style="left:548.5999999999999px;top:929.3px;width:57px;height:28.4px;background:#0078d7;border:2px dotted #ff8c1a;background-clip:padding-box;"></div>
<span class="t" style="left:552.80px;top:935.08px;font:400 15.5px/1 'DejaVu Sans', sans-serif;color:#ffffff;transform:scaleX(0.8361);">97</span>
<div style="left:541.3px;top:1001.3px;width:322.4px;height:69.90000000000005px;background:#ffffff;border-top:1.5px solid #b4b4b4;border-left:1.2px solid #a8a8a8;border-right:1px solid #f4f4f4;border-bottom:3px solid #ececec;"></div>
<div style="left:542.5px;top:1002.8px;width:320.2px;height:65.90000000000005px;background:#ffffff;border-top:2.2px solid #6c6c6c;border-left:2px solid #6c6c6c;border-right:1.5px solid #e6e6e6;border-bottom:0.5px solid #e6e6e6;"></div>
<div style="left:832.1999999999999px;top:1005px;width:29px;height:63.200000000000045px;background:#f0f0f0;"></div>
<svg style="left:837.1999999999999px;top:1015.5px" width="16" height="12" viewBox="0 0 16 12" fill="none"><path d="M2 10L8 3.5L14 10" stroke="#c4c4c4" stroke-width="2.6"/></svg>
<svg style="left:837.1999999999999px;top:1048.7px" width="16" height="12" viewBox="0 0 16 12" fill="none"><path d="M2 2L8 8.5L14 2" stroke="#c4c4c4" stroke-width="2.6"/></svg>
<span class="t" style="left:547.90px;top:1008.57px;font:400 20px/1 'Liberation Sans', sans-serif;color:#000;transform:scaleX(0.9330);">Turns on radiator fans on low</span>
<span class="t" style="left:547.90px;top:1031.17px;font:400 20px/1 'Liberation Sans', sans-serif;color:#000;transform:scaleX(0.9330);">speed if ECT is above this level.</span>
</div></body></html>
